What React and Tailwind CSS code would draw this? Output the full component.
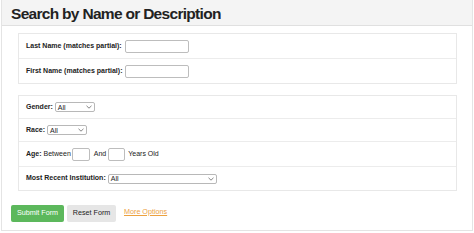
import React from "react";

function Chevron() {
  return (
    <svg width="6" height="4" viewBox="0 0 6 4" className="shrink-0">
      <path d="M0.5 0.8 L3 3.2 L5.5 0.8" fill="none" stroke="#666" strokeWidth="0.8" />
    </svg>
  );
}

function FakeSelect({ w }) {
  return (
    <div className={`${w} h-[10px] border border-[#b8b8b8] rounded-[2px] bg-white flex items-center justify-between pl-[2px] pr-[2px] text-[7px] leading-none text-[#222] font-normal`}>
      <span>All</span>
      <Chevron />
    </div>
  );
}

export default function App() {
  return (
    <div className="w-[474px] h-[233px] bg-white font-['Liberation_Sans',Arial,sans-serif] text-[#222] overflow-hidden">
      <div className="w-[472px] h-[231px] border-r border-b border-l border-[#e4e4e4] ml-[1px]">
        <div className="h-[26px] bg-[#f4f4f4] border-b border-[#e0e0e0] flex items-center pl-[9px] pt-[2px]">
          <h1 className="text-[15.5px] font-bold text-[#222] tracking-[-0.7px] leading-none">
            Search by Name or Description
          </h1>
        </div>
        <div className="pl-[16px] pr-[15px] pt-[7px]">
          <div className="border border-[#e8e8e8] w-[439px]">
            <div className="h-[25px] flex items-center pl-[7px] border-b border-[#ececec] text-[7px] font-bold">
              <span>Last Name (matches partial):</span>
              <div className="ml-[3px] w-[64px] h-[13px] border border-[#bdbdbd] rounded-[2px] bg-white" />
            </div>
            <div className="h-[24px] flex items-center pl-[7px] text-[7px] font-bold">
              <span>First Name (matches partial):</span>
              <div className="ml-[3px] w-[64px] h-[13px] border border-[#bdbdbd] rounded-[2px] bg-white" />
            </div>
          </div>
          <div className="border border-[#e8e8e8] w-[439px] mt-[11px]">
            <div className="h-[23px] flex items-center pl-[7px] border-b border-[#ececec] text-[7px] font-bold">
              <span>Gender:</span>
              <div className="ml-[2px]"><FakeSelect w="w-[40px]" /></div>
            </div>
            <div className="h-[23px] flex items-center pl-[7px] border-b border-[#ececec] text-[7px] font-bold">
              <span>Race:</span>
              <div className="ml-[2px]"><FakeSelect w="w-[40px]" /></div>
            </div>
            <div className="h-[25px] flex items-center pl-[7px] border-b border-[#ececec] text-[7px]">
              <span className="font-bold">Age:</span>
              <span className="ml-[2px]">Between</span>
              <div className="ml-[1px] w-[18px] h-[13px] border border-[#bdbdbd] rounded-[2px] bg-white" />
              <span className="ml-[4px]">And</span>
              <div className="ml-[2px] w-[17px] h-[13px] border border-[#bdbdbd] rounded-[2px] bg-white" />
              <span className="ml-[3px]">Years Old</span>
            </div>
            <div className="h-[23px] flex items-center pl-[7px] text-[7px] font-bold">
              <span>Most Recent Institution:</span>
              <div className="ml-[2px]"><FakeSelect w="w-[109px]" /></div>
            </div>
          </div>
        </div>
        <div className="flex items-center pl-[9px] mt-[14px] text-[7.2px]">
          <div className="w-[53px] h-[17px] bg-[#5cb85c] rounded-[2px] text-white flex items-center justify-center">
            Submit Form
          </div>
          <div className="ml-[3px] w-[49px] h-[17px] bg-[#e6e6e6] rounded-[2px] text-[#222] flex items-center justify-center">
            Reset Form
          </div>
          <a className="ml-[8px] text-[#eca13f] underline mb-[3px]">More Options</a>
        </div>
      </div>
    </div>
  );
}
